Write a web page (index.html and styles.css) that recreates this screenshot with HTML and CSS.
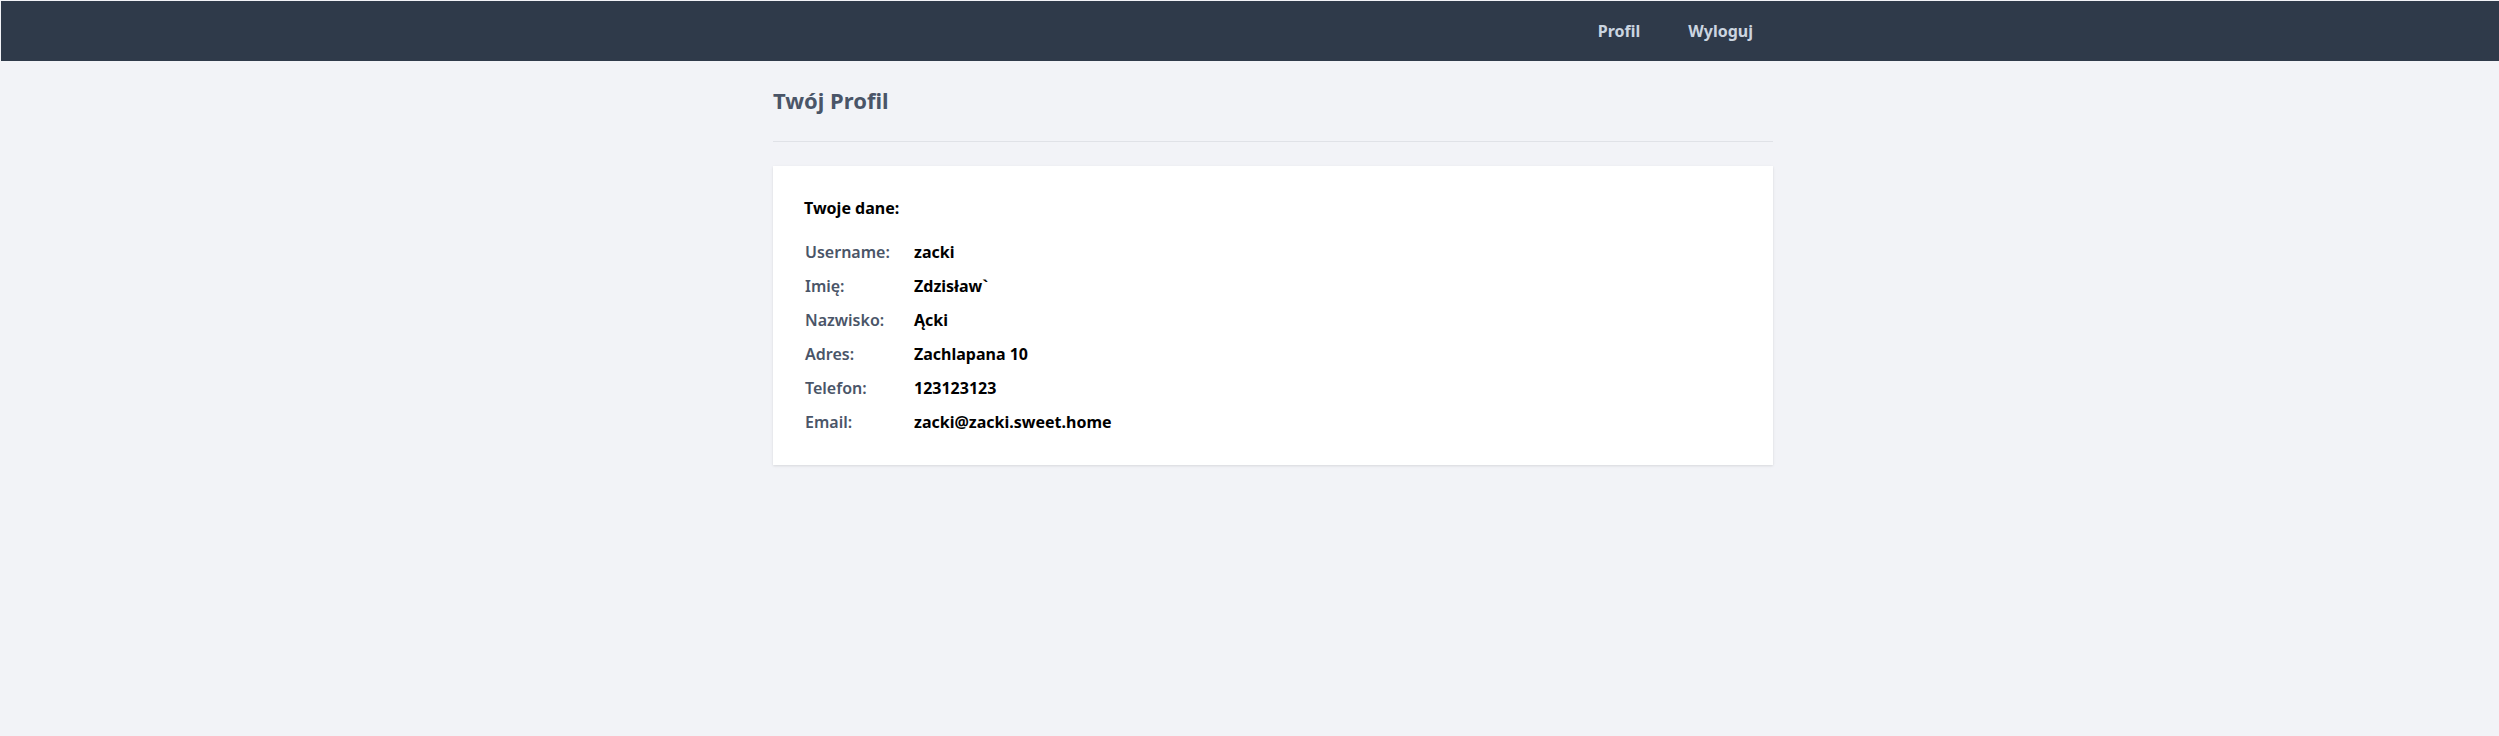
FILE: index.html
```html
<!DOCTYPE html>
<html lang="pl">
<head>
<meta charset="utf-8">
<title>Twój Profil</title>
<link rel="stylesheet" href="styles.css">
</head>
<body>
<nav class="navbar">
  <div class="nav-inner">
    <a class="nav-link" href="#">Profil</a>
    <a class="nav-link" href="#">Wyloguj</a>
  </div>
</nav>
<main class="page">
  <div class="container">
    <h1 class="page-title">Twój Profil</h1>
    <hr class="divider">
    <section class="card">
      <h2 class="card-title">Twoje dane:</h2>
      <div class="details">
        <div class="label">Username:</div><div class="value">zacki</div>
        <div class="label">Imię:</div><div class="value">Zdzisław`</div>
        <div class="label">Nazwisko:</div><div class="value">Ącki</div>
        <div class="label">Adres:</div><div class="value">Zachlapana 10</div>
        <div class="label">Telefon:</div><div class="value">123123123</div>
        <div class="label">Email:</div><div class="value">zacki@zacki.sweet.home</div>
      </div>
    </section>
  </div>
</main>
</body>
</html>
```
FILE: styles.css
```css
* { box-sizing: border-box; }
html, body { margin: 0; padding: 0; }
body {
  background: #f2f3f7;
  font-family: "Noto Sans", "Open Sans", sans-serif;
  color: #000;
  min-height: 736px;
}
.navbar {
  margin: 1px 0 0 1px;
  height: 60px;
  background: #2f3a4a;
  display: flex;
  justify-content: center;
  padding-left: 46px;
}
.nav-inner {
  width: 1000px;
  display: flex;
  justify-content: flex-end;
  align-items: center;
  gap: 8px;
}
.nav-link {
  color: #cbd5e0;
  text-decoration: none;
  font-weight: 700;
  font-size: 16px;
  padding: 0 20px;
  line-height: 24px;
}
.page {
  display: flex;
  justify-content: center;
  padding-left: 47px;
}
.container {
  width: 1000px;
}
.page-title {
  margin: 0;
  padding-top: 23px;
  font-size: 22px;
  line-height: 32px;
  font-weight: 700;
  color: #4a5568;
}
.divider {
  margin: 25px 0 0 0;
  border: 0;
  border-top: 1px solid #e0e2e7;
  height: 0;
}
.card {
  margin-top: 24px;
  background: #fff;
  box-shadow: 0 1px 3px rgba(0,0,0,0.08), 0 1px 2px rgba(0,0,0,0.04);
  padding: 30px 31px 26px;
}
.card-title {
  margin: 0;
  font-size: 16px;
  line-height: 24px;
  font-weight: 700;
}
.details {
  margin-top: 15px;
  display: grid;
  grid-template-columns: 110px auto;
  grid-auto-rows: 34px;
  align-items: center;
  font-size: 16px;
  line-height: 24px;
}
.label {
  padding-left: 1px;
  color: #4a5568;
  font-weight: 600;
}
.value {
  font-weight: 700;
  color: #000;
}
```
